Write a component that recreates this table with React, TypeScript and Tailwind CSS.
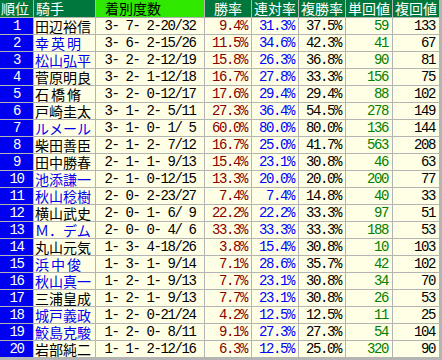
const rows: [string, boolean, string, string, string, string, string, string][] = [
  ['田辺裕信', false, '3- 7- 2-20/32', '9.4%', '31.3%', '37.5%', '59', '133'],
  ['幸英明', true, '3- 6- 2-15/26', '11.5%', '34.6%', '42.3%', '41', '67'],
  ['松山弘平', true, '3- 2- 2-12/19', '15.8%', '26.3%', '36.8%', '90', '81'],
  ['菅原明良', false, '3- 2- 1-12/18', '16.7%', '27.8%', '33.3%', '156', '75'],
  ['石橋脩', false, '3- 2- 0-12/17', '17.6%', '29.4%', '29.4%', '88', '102'],
  ['戸崎圭太', false, '3- 1- 2- 5/11', '27.3%', '36.4%', '54.5%', '278', '149'],
  ['ルメール', true, '3- 1- 0- 1/ 5', '60.0%', '80.0%', '80.0%', '136', '144'],
  ['柴田善臣', false, '2- 1- 2- 7/12', '16.7%', '25.0%', '41.7%', '563', '208'],
  ['田中勝春', false, '2- 1- 1- 9/13', '15.4%', '23.1%', '30.8%', '46', '63'],
  ['池添謙一', true, '2- 1- 0-12/15', '13.3%', '20.0%', '20.0%', '200', '77'],
  ['秋山稔樹', true, '2- 0- 2-23/27', '7.4%', '7.4%', '14.8%', '40', '33'],
  ['横山武史', false, '2- 0- 1- 6/ 9', '22.2%', '22.2%', '33.3%', '97', '51'],
  ['Ｍ．デム', true, '2- 0- 0- 4/ 6', '33.3%', '33.3%', '33.3%', '188', '53'],
  ['丸山元気', false, '1- 3- 4-18/26', '3.8%', '15.4%', '30.8%', '10', '103'],
  ['浜中俊', true, '1- 3- 1- 9/14', '7.1%', '28.6%', '35.7%', '42', '102'],
  ['秋山真一', true, '1- 2- 1- 9/13', '7.7%', '23.1%', '30.8%', '34', '70'],
  ['三浦皇成', false, '1- 2- 1- 9/13', '7.7%', '23.1%', '30.8%', '26', '53'],
  ['城戸義政', true, '1- 2- 0-21/24', '4.2%', '12.5%', '12.5%', '11', '25'],
  ['鮫島克駿', true, '1- 2- 0- 8/11', '9.1%', '27.3%', '27.3%', '54', '104'],
  ['岩部純二', false, '1- 1- 2-12/16', '6.3%', '12.5%', '25.0%', '320', '90'],
];

const jp = "font-['Noto_Sans_CJK_JP',sans-serif]";
const mono = "font-['Liberation_Mono',monospace] text-[14px] tracking-[-1.4px] whitespace-pre";
const head = `${jp} text-[14px] leading-[17px] h-[17px] bg-[#00773c] text-white`;
const cell = 'h-[16px] bg-[#ffffe6] leading-[16px] overflow-hidden';

export default function App() {
  return (
    <div className="w-[442px] h-[360px] bg-[#b4b4b4]">
      <div className="grid grid-cols-[33px_61px_108px_46px_46px_46px_46px_46px] gap-px w-[439px]">
        <div className={`${head} pl-px`}>順位</div>
        <div className={`${head} pl-[2px]`}>騎手</div>
        <div className={`${jp} text-[14px] leading-[17px] h-[17px] bg-[#2fe800] text-black pl-[9px]`}>着別度数</div>
        <div className={`${head} text-center`}>勝率</div>
        <div className={`${head} text-center`}>連対率</div>
        <div className={`${head} text-center`}>複勝率</div>
        <div className={`${head} text-center`}>単回値</div>
        <div className={`${head} text-center`}>複回値</div>
        {rows.map(([name, blue, rec, win, ren, fuku, tan, fk], i) => (
          <div key={i} className="contents">
            <div className={`h-[16px] leading-[16px] bg-[#0000f0] text-white text-center ${mono}`}>{i + 1}</div>
            <div
              className={`${cell} ${jp} text-[14px] pl-px ${blue ? 'text-[#0000ee]' : 'text-black'} ${
                name.length === 3 ? 'tracking-[2px]' : ''
              }`}>
              {name}
            </div>
            <div className={`${cell} ${mono} text-center text-black`}>{rec}</div>
            <div className={`${cell} ${mono} text-right pr-[4px] text-[#880000]`}>{win}</div>
            <div className={`${cell} ${mono} text-right pr-[4px] text-[#0000ff]`}>{ren}</div>
            <div className={`${cell} ${mono} text-right pr-[4px] text-black`}>{fuku}</div>
            <div className={`${cell} ${mono} text-right pr-[4px] text-[#008000]`}>{tan}</div>
            <div className={`${cell} ${mono} text-right pr-[4px] text-black`}>{fk}</div>
          </div>
        ))}
      </div>
    </div>
  );
}
